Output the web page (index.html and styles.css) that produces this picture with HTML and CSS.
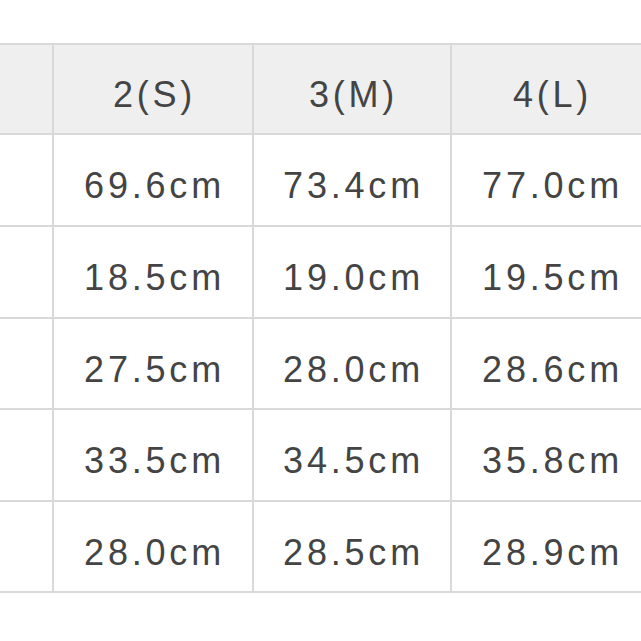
FILE: index.html
```html
<!DOCTYPE html>
<html>
<head>
<meta charset="utf-8">
<link rel="stylesheet" href="styles.css">
</head>
<body>
<div class="sheet">
  <div class="cell head first"></div>
  <div class="cell head">2(S)</div>
  <div class="cell head">3(M)</div>
  <div class="cell head">4(L)</div>

  <div class="cell first"></div>
  <div class="cell">69.6cm</div>
  <div class="cell">73.4cm</div>
  <div class="cell">77.0cm</div>

  <div class="cell first"></div>
  <div class="cell">18.5cm</div>
  <div class="cell">19.0cm</div>
  <div class="cell">19.5cm</div>

  <div class="cell first"></div>
  <div class="cell">27.5cm</div>
  <div class="cell">28.0cm</div>
  <div class="cell">28.6cm</div>

  <div class="cell first"></div>
  <div class="cell">33.5cm</div>
  <div class="cell">34.5cm</div>
  <div class="cell">35.8cm</div>

  <div class="cell first"></div>
  <div class="cell">28.0cm</div>
  <div class="cell">28.5cm</div>
  <div class="cell">28.9cm</div>
</div>
</body>
</html>
```
FILE: styles.css
```css
html, body {
  margin: 0;
  padding: 0;
  background: #ffffff;
  overflow: hidden;
  width: 641px;
  height: 641px;
}
body {
  padding-top: 43px;
  box-sizing: border-box;
}
.sheet {
  display: grid;
  grid-template-columns: 54px 200px 198px 200px;
  grid-template-rows: 90px 92px 92px 91px 92px 91px;
  width: 652px;
  border-top: 2px solid #d9d9d9;
  font-family: "Liberation Sans", Arial, sans-serif;
  font-size: 36px;
  letter-spacing: 3.8px;
  color: #444444;
}
.cell {
  box-sizing: border-box;
  border-right: 2px solid #d9d9d9;
  border-bottom: 2px solid #d9d9d9;
  display: flex;
  align-items: center;
  justify-content: center;
  padding-top: 12px;
  padding-left: 3px;
}
.head {
  background: #efefef;
}
```
